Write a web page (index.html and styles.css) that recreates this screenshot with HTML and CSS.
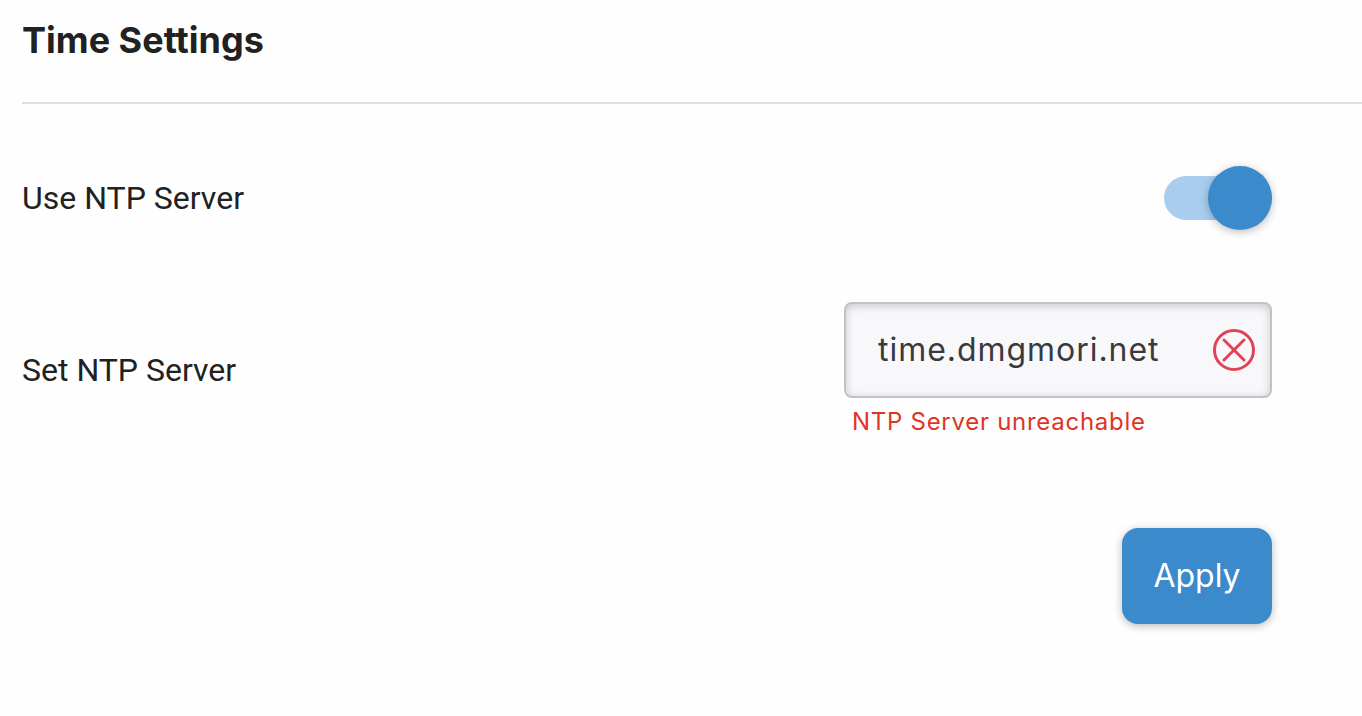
FILE: index.html
```html
<!DOCTYPE html>
<html lang="en">
<head>
<meta charset="utf-8">
<meta name="viewport" content="width=device-width, initial-scale=1">
<title>Time Settings</title>
<link rel="stylesheet" href="styles.css">
</head>
<body>
<main class="settings">
  <h1 class="title">Time Settings</h1>
  <form class="form">
    <div class="row">
      <label class="label" for="use-ntp">Use NTP Server</label>
      <input class="switch" type="checkbox" role="switch" id="use-ntp" checked>
    </div>
    <div class="row row-server">
      <label class="label" for="server">Set NTP Server</label>
      <div class="field">
        <div class="box">
          <input class="input" type="text" id="server" value="time.dmgmori.net" aria-invalid="true" aria-describedby="server-error">
          <svg class="icon" viewBox="0 0 44 44" aria-hidden="true"><circle cx="22" cy="22" r="19.5"/><path d="M12 12 32 32M32 12 12 32"/></svg>
        </div>
        <p class="error" id="server-error">NTP Server unreachable</p>
      </div>
    </div>
    <div class="actions"><button class="apply" type="button">Apply</button></div>
  </form>
</main>
</body>
</html>
```
FILE: styles.css
```css
* { box-sizing: border-box; }
body { margin: 0; background: #fefefe; color: #212121; font-family: Roboto, sans-serif; }
.settings { padding-left: 22px; }
.title { margin: 0; padding: 16px 0 38px; border-bottom: 2px solid #dedede; font: 700 36px/48px Inter, sans-serif; font-variant-ligatures: none; }
.form { padding: 62px 90px 32px 0; }
.row { display: flex; align-items: center; justify-content: space-between; }
.row-server { margin-top: 72px; }
.label { font-size: 32px; line-height: 40px; }
.switch { appearance: none; display: flex; align-items: center; justify-content: flex-end; width: 108px; height: 44px; margin: 10px 0; background: #a9cdee; border-radius: 22px; }
.switch::before { content: ""; flex: none; width: 64px; height: 64px; border-radius: 50%; background: #3b8acb; box-shadow: 0 2px 8px #0004; }
.switch:not(:checked) { justify-content: flex-start; background: #cccccc; }
.field { width: 428px; }
.box { display: flex; align-items: center; height: 96px; padding: 0 14px 0 32px; border: 2px solid #c1c2c6; border-radius: 8px; background: #f8f8fb; box-shadow: inset 0 2px 8px #0003; }
.input { flex: 1; min-width: 0; padding: 0; border: 0; outline: 0; background: transparent; color: #393a3e; font: 400 32px/40px Inter, sans-serif; letter-spacing: 0.03em; }
.icon { width: 44px; height: 44px; fill: none; stroke: #e04356; stroke-width: 3; stroke-linecap: round; }
.error { margin: 8px 0 0 8px; color: #e03426; font: 400 24px/32px Inter, sans-serif; letter-spacing: 0.03em; }
.actions { display: flex; justify-content: flex-end; margin-top: 90px; }
.apply { width: 150px; height: 96px; border: 0; border-radius: 16px; background: #3b8acb; color: #ffffff; font: 400 32px/40px Inter, sans-serif; box-shadow: 0 2px 8px #0004; }
```
